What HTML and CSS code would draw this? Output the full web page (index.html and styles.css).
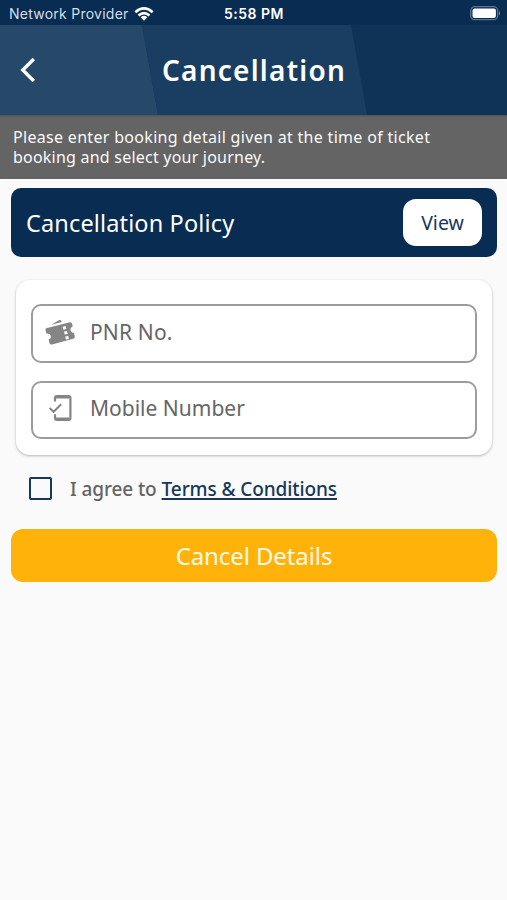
FILE: index.html
```html
<!DOCTYPE html>
<html lang="en">
<head>
<meta charset="utf-8">
<title>Cancellation</title>
<link rel="stylesheet" href="styles.css">
</head>
<body>
<div class="status">
  <div class="carrier"><span>Network Provider</span>
    <svg width="20" height="14" viewBox="0 0 20 14" fill="none" stroke="#fff" stroke-width="2.6"><path d="M1.3 5.2Q10-2.4 18.7 5.2M4.5 8.6Q10 3.8 15.5 8.6"/><path d="M6.6 10.2Q10 7.5 13.4 10.2L10 13.7Z" fill="#fff" stroke="none"/></svg>
  </div>
  <span class="clock">5:58 PM</span>
  <svg class="battery" width="31" height="15" viewBox="0 0 31 15"><rect x=".7" y=".7" width="27" height="13" rx="4" fill="none" stroke="#5d7590" stroke-width="1.3"/><rect x="2.5" y="2.5" width="23.4" height="9.4" rx="2" fill="#fff"/><path d="M29 5q2 2.2 0 4.4z" fill="#8292a5"/></svg>
</div>
<header class="header">
  <svg class="stripes" viewBox="0 0 507 90" preserveAspectRatio="none"><path d="M0 0H142L158 90H0Z" fill="#264969"/><path d="M142 0H351L367 90H158Z" fill="#1a3e61"/></svg>
  <svg class="back" width="16" height="26" viewBox="0 0 16 26" fill="none" stroke="#fff" stroke-width="3.4"><path d="M13.8 2L2.8 13L13.8 24"/></svg>
  <h1>Cancellation</h1>
</header>
<p class="info"><span class="line1">Please enter booking detail given at the time of ticket</span><br><span class="line2">booking and select your journey.</span></p>
<main>
  <section class="policy"><span class="policy-name">Cancellation Policy</span><button class="view">View</button></section>
  <section class="card">
    <div class="field">
      <svg width="32" height="30" viewBox="0 0 32 30" fill="#858585"><path d="M7.2 7.8L15.4 3.1Q16.8 2.5 17.4 4.2L17.8 5.1Z"/><path d="M2.2 11.2L25.8 5.2Q27.8 4.8 28.2 7L28.7 9.6Q25.5 11.2 26.8 13.9Q28 16 30.1 16.1L30.8 19.8Q31 21.2 29.2 21.7L8.1 27.5Q6 28 5.4 26L4.7 22.5Q7.5 21.3 6.7 18.5Q5.7 16.1 2.4 16.5L1.5 13Q1.2 11.7 2.2 11.2Z"/><g fill="#fff"><path d="M18.6 9.7l3-.7.7 3-3 .7zM20 14.6l3-.7.7 3-3 .7zM21.2 19.6l3-.7.7 3-3 .7z"/></g></svg>
      <span class="pnr">PNR No.</span>
    </div>
    <div class="field">
      <svg width="32" height="30" viewBox="0 0 32 30" fill="none" stroke="#858585"><path d="M11 8.6V4.8Q11 3 12.8 3H24.6Q26.4 3 26.4 4.8V25Q26.4 26.8 24.6 26.8H12.8Q11 26.8 11 25V21.2" stroke-width="2.2"/><path d="M12 3.9H25.5M12 25.9H25.5" stroke-width="3"/><path d="M5.6 15.1L9.6 18.8L17.2 11.3" stroke-width="2"/></svg>
      <span>Mobile Number</span>
    </div>
  </section>
  <div class="agree"><span class="check"></span><span class="agree-text">I agree to</span><a class="terms">Terms &amp; Conditions</a></div>
  <button class="submit">Cancel Details</button>
</main>
</body>
</html>
```
FILE: styles.css
```css
* { box-sizing: border-box; }
body { margin: 0; height: 900px; background: #fafafa; font-family: "Noto Sans", sans-serif; }
button { border: 0; padding: 0; font-family: inherit; }
.status { height: 25px; background: #082c52; color: #fff; display: grid; grid-template-columns: 1fr auto 1fr; align-items: center; padding: 2px 6px 0 9px; font-family: Inter, sans-serif; }
.carrier { display: flex; align-items: center; gap: 5px; font-size: 14px; line-height: 20px; color: #d5dee7; letter-spacing: .25px; white-space: nowrap; }
.clock { font-size: 14px; font-weight: 600; letter-spacing: .5px; margin-left: -2px; }
.battery { justify-self: end; }
.header { height: 90px; background: #0f3357; position: relative; display: flex; align-items: center; }
.stripes { position: absolute; inset: 0; width: 100%; height: 100%; }
.back { position: relative; margin-left: 20px; }
h1 { position: relative; flex: 1; margin: 0 35px 0 0; text-align: center; font-size: 28px; font-weight: 600; line-height: 40px; color: #fff; letter-spacing: 1.25px; }
.info { margin: 0; height: 64px; padding: 12px 13px 0; background: #646464; color: #fafafa; font-size: 16px; line-height: 20px; white-space: nowrap; box-shadow: inset 0 2px 2px -1px #505050; }
.line1 { letter-spacing: .31px; }
.line2 { letter-spacing: .22px; }
main { padding: 9px 10px 0 11px; }
.policy { height: 69px; border-radius: 10px; background: #082c52; display: flex; align-items: center; justify-content: space-between; padding: 0 15px; color: #fff; font-size: 23.5px; }
.policy-name { letter-spacing: .14px; }
.view { width: 79px; height: 47px; border-radius: 13px; background: #fff; color: #16385c; font-size: 19.5px; }
.card { margin: 23px 5px 0 5px; height: 175px; padding: 24px 15px 0; border-radius: 14px; background: #fff; box-shadow: 0 1px 3px rgba(0,0,0,.28); display: flex; flex-direction: column; gap: 18px; }
.field { height: 58.5px; flex: none; border: 2px solid #9c9c9c; border-radius: 10px; display: flex; align-items: center; gap: 14px; padding: 0 0 3px 11px; font-size: 21px; color: #666; }
.pnr { letter-spacing: .15px; }
.agree { height: 24px; margin-top: 21px; padding-left: 18px; display: flex; align-items: center; font-size: 19px; font-weight: 500; line-height: 24px; }
.check { width: 23px; height: 23px; border: 2.5px solid #15385b; border-radius: 2px; margin-right: 18px; }
.agree-text { color: #646464; margin-right: 5px; letter-spacing: -.1px; padding-top: 1px; }
.terms { color: #16375b; letter-spacing: -.1px; padding-top: 1px; text-decoration: underline; text-decoration-thickness: 2px; text-underline-offset: 2px; }
.submit { display: block; width: 100%; height: 53px; margin-top: 29px; border-radius: 12px; background: #ffb30a; color: #fff9e8; font-size: 24px; letter-spacing: -.1px; }
```
